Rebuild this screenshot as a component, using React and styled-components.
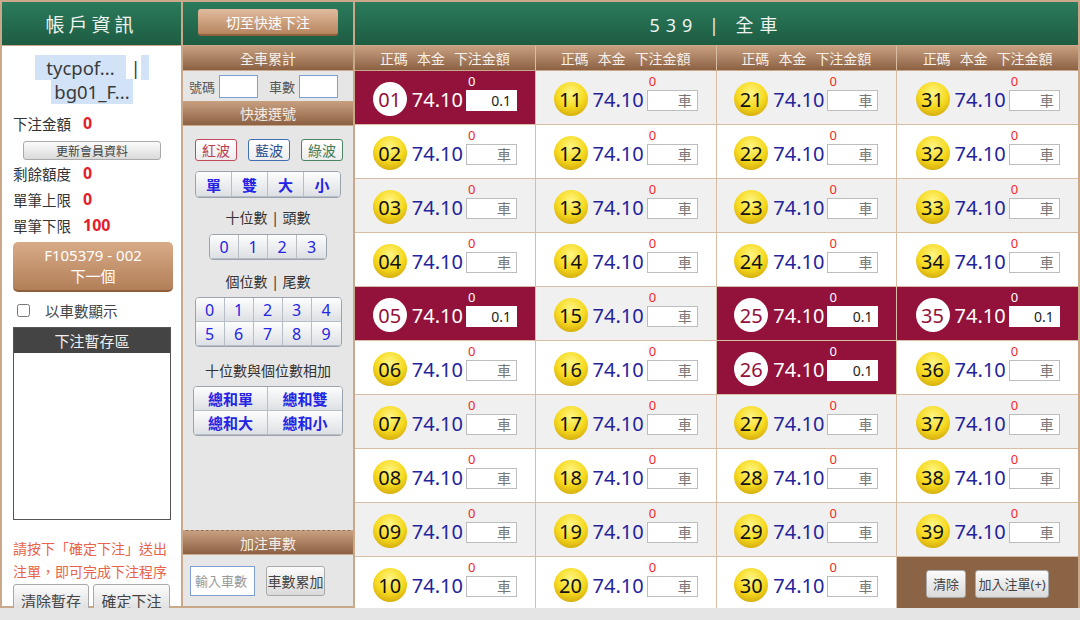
import React from "react";
import styled, { createGlobalStyle } from "styled-components";

const GlobalStyle = createGlobalStyle`
  html, body {
    margin: 0;
    padding: 0;
    background: #e5e5e5;
  }
  body {
    font-family: "Noto Sans", "Noto Sans CJK TC", sans-serif;
  }
  * {
    box-sizing: border-box;
  }
`;

const TAN = "#c9a98a";
const LINE = "#d6bda3";
const SEL = "#93123b";

const Frame = styled.div`
  width: 1080px;
  height: 608px;
  border: 2px solid ${TAN};
  display: grid;
  grid-template-columns: 181px 172px 1fr;
  background: #fff;
`;

const GreenHeader = styled.div`
  height: 44px;
  flex: none;
  border-bottom: 1px solid ${TAN};
  background: linear-gradient(#2b7b5c, #1e5c42);
  color: #eef3ef;
  display: flex;
  align-items: center;
  justify-content: center;
  font-size: ${(p) => p.$size || 19}px;
  letter-spacing: ${(p) => p.$spacing || 4}px;
`;

const BrownBar = styled.div`
  height: 25px;
  flex: none;
  border-bottom: 1px solid ${TAN};
  border-top: ${(p) => (p.$dashed ? `1px dashed #bfa58c` : "none")};
  background: linear-gradient(#c8a080, #8c6143);
  color: #f6efe8;
  font-size: 14px;
  display: flex;
  align-items: center;
  justify-content: center;
`;

/* ---------- left column ---------- */

const LeftCol = styled.div`
  border-right: 2px solid ${TAN};
  background: #fff;
  display: flex;
  flex-direction: column;
  min-height: 0;
`;

const LeftBody = styled.div`
  padding: 0 10px 0 11px;
  display: flex;
  flex-direction: column;
`;

const Names = styled.div`
  margin-top: 10px;
  text-align: center;
  font-size: 18.5px;
  line-height: 24px;
  color: #3a3a3a;
`;

const Hl = styled.span`
  background: #d2e3f7;
  padding: 0 ${(p) => p.$pad || 0}px;
`;

const InfoRow = styled.div`
  height: 26px;
  display: flex;
  align-items: center;
  font-size: 14.5px;
  color: #333;
`;

const InfoValue = styled.span`
  margin-left: 12px;
  color: #e3202b;
  font-weight: bold;
  font-size: 16px;
`;

const GrayBtn = styled.button`
  font-family: inherit;
  background: linear-gradient(#fbfbfb, #dadada);
  border: 1px solid #a9a9a9;
  border-radius: 3px;
  color: #444;
  padding: 0;
  font-size: ${(p) => p.$fs || 13}px;
  width: ${(p) => p.$w}px;
  height: ${(p) => p.$h}px;
  flex: none;
`;

const UpdateBtn = styled(GrayBtn)`
  margin: 5px 0 0 10px;
`;

const NextBtn = styled.div`
  margin-top: 4px;
  height: 50px;
  width: 160px;
  border-radius: 5px;
  background: linear-gradient(#d8ab88, #b27f58);
  border-bottom: 2px solid #8f5f3a;
  color: #fff;
  font-size: 15px;
  line-height: 21px;
  display: flex;
  flex-direction: column;
  align-items: center;
  justify-content: center;
`;

const CheckRow = styled.label`
  margin-top: 8px;
  height: 20px;
  display: flex;
  align-items: center;
  gap: 15px;
  font-size: 14.5px;
  color: #444;
  padding-left: 4px;
  input {
    margin: 0;
    width: 13px;
    height: 13px;
  }
`;

const Stash = styled.div`
  margin-top: 7px;
  width: 158px;
  height: 193px;
  border: 1px solid #555;
  display: flex;
  flex-direction: column;
`;

const StashHead = styled.div`
  height: 25px;
  background: #444;
  color: #f2f2f2;
  font-size: 15px;
  display: flex;
  align-items: center;
  justify-content: center;
`;

const Notice = styled.div`
  margin-top: 17px;
  font-size: 14px;
  line-height: 23px;
  color: #e8634c;
`;

const BottomBtns = styled.div`
  margin-top: 1px;
  display: flex;
  gap: 4px;
`;

/* ---------- middle column ---------- */

const MidCol = styled.div`
  border-right: 2px solid ${TAN};
  background: #e6e6e6;
  display: flex;
  flex-direction: column;
  min-height: 0;
`;

const SwitchBtn = styled.div`
  width: 140px;
  height: 27px;
  margin-top: -2px;
  border-radius: 3px;
  background: linear-gradient(#e2bc9e, #b68560);
  border-bottom: 2px solid #8f623f;
  color: #fff;
  font-size: 14px;
  letter-spacing: 0;
  display: flex;
  align-items: center;
  justify-content: center;
`;

const SumRow = styled.div`
  height: 30px;
  display: flex;
  align-items: center;
  padding-left: 6px;
  gap: 4px;
  font-size: 13px;
  color: #555;
`;

const SmallInput = styled.input`
  width: ${(p) => p.$w}px;
  height: ${(p) => p.$h}px;
  border: 1px solid #7d9fd3;
  background: #fff;
  padding: 0 4px;
  margin-right: ${(p) => p.$mr || 0}px;
  font-family: inherit;
  font-size: 13px;
  &::placeholder {
    color: #999;
  }
`;

const WaveRow = styled.div`
  margin-top: 13px;
  display: flex;
  justify-content: center;
  gap: 11px;
  padding-left: 2px;
`;

const WaveBtn = styled.div`
  width: 42px;
  height: 22px;
  border: 1px solid ${(p) => p.$c};
  border-radius: 3px;
  background: linear-gradient(#ffffff, #ececec);
  color: ${(p) => p.$t};
  font-size: 14px;
  display: flex;
  align-items: center;
  justify-content: center;
`;

const Label = styled.div`
  margin-top: ${(p) => p.$mt}px;
  height: 22px;
  display: flex;
  align-items: center;
  justify-content: center;
  font-size: 14px;
  color: #333;
`;

const Group = styled.div`
  margin: ${(p) => p.$mt}px auto 0;
  display: grid;
  grid-template-columns: repeat(${(p) => p.$cols}, ${(p) => p.$w}px);
  grid-auto-rows: ${(p) => p.$h}px;
  border: 1px solid #9ba4ae;
  border-radius: 4px;
  overflow: hidden;
`;

const GroupBtn = styled.div`
  border-right: 1px solid #b7bec6;
  border-bottom: 1px solid #b7bec6;
  background: linear-gradient(#fdfdfd, #dde0e4);
  color: #2424e4;
  font-size: ${(p) => p.$fs || 16}px;
  font-weight: ${(p) => (p.$bold ? "bold" : "normal")};
  display: flex;
  align-items: center;
  justify-content: center;
  &:nth-child(${(p) => p.$cols}n) {
    border-right: none;
  }
`;

const Spacer = styled.div`
  flex: 1;
`;

const AddRow = styled.div`
  height: 51px;
  flex: none;
  display: flex;
  align-items: center;
  padding-left: 7px;
  gap: 11px;
`;

/* ---------- right area ---------- */

const RightCol = styled.div`
  display: flex;
  flex-direction: column;
  min-width: 0;
  min-height: 0;
`;

const ColHeads = styled.div`
  display: grid;
  grid-template-columns: repeat(4, 1fr);
  height: 25px;
  flex: none;
  border-bottom: 1px solid ${TAN};
  background: linear-gradient(#c8a080, #8c6143);
`;

const ColHead = styled.div`
  display: flex;
  align-items: center;
  justify-content: center;
  gap: 9px;
  color: #f6efe8;
  font-size: 14px;
  border-right: 1px solid #d9bea4;
  &:last-child {
    border-right: none;
  }
`;

const Board = styled.div`
  flex: 1;
  display: grid;
  grid-template-columns: repeat(4, 1fr);
  grid-template-rows: repeat(10, 1fr);
  grid-auto-flow: column;
  min-height: 0;
`;

const Cell = styled.div`
  display: flex;
  align-items: center;
  justify-content: center;
  padding-top: 3px;
  border-right: ${(p) => (p.$lastCol ? "none" : `1px solid ${LINE}`)};
  border-bottom: ${(p) => (p.$lastRow ? "none" : `1px solid ${LINE}`)};
  background: ${(p) => (p.$sel ? SEL : p.$alt ? "#f0f0f0" : "#fff")};
`;

const ActionCell = styled(Cell)`
  background: #8b6446;
  padding-top: 0;
  gap: 9px;
`;

const Ball = styled.span`
  width: 34px;
  height: 34px;
  border-radius: 50%;
  flex: none;
  display: flex;
  align-items: center;
  justify-content: center;
  font-size: 20px;
  color: ${(p) => (p.$sel ? SEL : "#111")};
  background: ${(p) =>
    p.$sel
      ? "#fff"
      : "radial-gradient(circle at 50% 32%, #fff685 0%, #f6d91e 50%, #c39505 100%)"};
`;

const Odds = styled.span`
  margin: 0 3px 0 5px;
  font-size: 20px;
  color: ${(p) => (p.$sel ? "#fff" : "#23239c")};
`;

const Stack = styled.div`
  display: flex;
  flex-direction: column;
  margin-bottom: 13px;
`;

const Zero = styled.span`
  height: 14px;
  line-height: 14px;
  font-size: 13px;
  padding-left: 2px;
  margin-bottom: 2px;
  color: ${(p) => (p.$sel ? "#fff" : "#f02a2a")};
`;

const BetInput = styled.input`
  width: 51px;
  height: 21px;
  border: 1px solid ${(p) => (p.$sel ? "#fff" : "#bdbdbd")};
  background: #fff;
  text-align: right;
  padding: 0 5px;
  font-family: inherit;
  font-size: 14px;
  color: #222;
  &::placeholder {
    color: #777;
  }
`;

const selected = new Set([1, 5, 25, 26, 35]);
const pad = (n) => String(n).padStart(2, "0");

function NumberCell({ n }) {
  const row = (n - 1) % 10;
  const col = Math.floor((n - 1) / 10);
  const sel = selected.has(n);
  return (
    <Cell $sel={sel} $alt={row % 2 === 0} $lastCol={col === 3} $lastRow={row === 9}>
      <Ball $sel={sel}>{pad(n)}</Ball>
      <Odds $sel={sel}>74.10</Odds>
      <Stack>
        <Zero $sel={sel}>0</Zero>
        <BetInput $sel={sel} placeholder="車" defaultValue={sel ? "0.1" : ""} />
      </Stack>
    </Cell>
  );
}

export default function App() {
  const nums = Array.from({ length: 39 }, (_, i) => i + 1);
  return (
    <>
      <GlobalStyle />
      <Frame>
        <LeftCol>
          <GreenHeader>帳戶資訊</GreenHeader>
          <LeftBody>
            <Names>
              <Hl $pad={11}>tycpof...</Hl> | <Hl $pad={4}> </Hl>
              <br />
              <Hl $pad={3}>bg01_F...</Hl>
            </Names>
            <InfoRow style={{ marginTop: 6 }}>
              下注金額<InfoValue>0</InfoValue>
            </InfoRow>
            <UpdateBtn $w={138} $h={19} $fs={12}>
              更新會員資料
            </UpdateBtn>
            <InfoRow>
              剩餘額度<InfoValue>0</InfoValue>
            </InfoRow>
            <InfoRow>
              單筆上限<InfoValue>0</InfoValue>
            </InfoRow>
            <InfoRow>
              單筆下限<InfoValue>100</InfoValue>
            </InfoRow>
            <NextBtn>
              <span>F105379 - 002</span>
              <span>下一個</span>
            </NextBtn>
            <CheckRow>
              <input type="checkbox" />
              以車數顯示
            </CheckRow>
            <Stash>
              <StashHead>下注暫存區</StashHead>
            </Stash>
            <Notice>
              請按下「確定下注」送出
              <br />
              注單，即可完成下注程序
            </Notice>
            <BottomBtns>
              <GrayBtn $w={76} $h={32} $fs={15}>
                清除暫存
              </GrayBtn>
              <GrayBtn $w={77} $h={32} $fs={15}>
                確定下注
              </GrayBtn>
            </BottomBtns>
          </LeftBody>
        </LeftCol>

        <MidCol>
          <GreenHeader>
            <SwitchBtn>切至快速下注</SwitchBtn>
          </GreenHeader>
          <BrownBar>全車累計</BrownBar>
          <SumRow>
            號碼
            <SmallInput $w={39} $h={23} $mr={7} />
            車數
            <SmallInput $w={39} $h={23} />
          </SumRow>
          <BrownBar>快速選號</BrownBar>
          <WaveRow>
            <WaveBtn $c="#c24a58" $t="#b84050">紅波</WaveBtn>
            <WaveBtn $c="#3f6fb3" $t="#2c4f8c">藍波</WaveBtn>
            <WaveBtn $c="#4d8463" $t="#3d7a55">綠波</WaveBtn>
          </WaveRow>
          <Group $mt={10} $cols={4} $w={36} $h={25}>
            {["單", "雙", "大", "小"].map((t) => (
              <GroupBtn key={t} $cols={4} $bold $fs={15}>
                {t}
              </GroupBtn>
            ))}
          </Group>
          <Label $mt={8}>十位數 | 頭數</Label>
          <Group $mt={6} $cols={4} $w={29} $h={24}>
            {[0, 1, 2, 3].map((t) => (
              <GroupBtn key={t} $cols={4}>
                {t}
              </GroupBtn>
            ))}
          </Group>
          <Label $mt={10}>個位數 | 尾數</Label>
          <Group $mt={5} $cols={5} $w={29} $h={24}>
            {[0, 1, 2, 3, 4, 5, 6, 7, 8, 9].map((t) => (
              <GroupBtn key={t} $cols={5}>
                {t}
              </GroupBtn>
            ))}
          </Group>
          <Label $mt={12}>十位數與個位數相加</Label>
          <Group $mt={5} $cols={2} $w={74} $h={24}>
            {["總和單", "總和雙", "總和大", "總和小"].map((t) => (
              <GroupBtn key={t} $cols={2} $bold $fs={15}>
                {t}
              </GroupBtn>
            ))}
          </Group>
          <Spacer />
          <BrownBar $dashed>加注車數</BrownBar>
          <AddRow>
            <SmallInput $w={65} $h={30} placeholder="輸入車數" />
            <GrayBtn $w={59} $h={30} $fs={14}>
              車數累加
            </GrayBtn>
          </AddRow>
        </MidCol>

        <RightCol>
          <GreenHeader $size={18} $spacing={6}>
            539 | 全車
          </GreenHeader>
          <ColHeads>
            {[0, 1, 2, 3].map((i) => (
              <ColHead key={i}>
                <span>正碼</span>
                <span>本金</span>
                <span>下注金額</span>
              </ColHead>
            ))}
          </ColHeads>
          <Board>
            {nums.map((n) => (
              <NumberCell key={n} n={n} />
            ))}
            <ActionCell $lastCol $lastRow>
              <GrayBtn $w={40} $h={28} $fs={13}>
                清除
              </GrayBtn>
              <GrayBtn $w={74} $h={28} $fs={13}>
                加入注單(+)
              </GrayBtn>
            </ActionCell>
          </Board>
        </RightCol>
      </Frame>
    </>
  );
}
